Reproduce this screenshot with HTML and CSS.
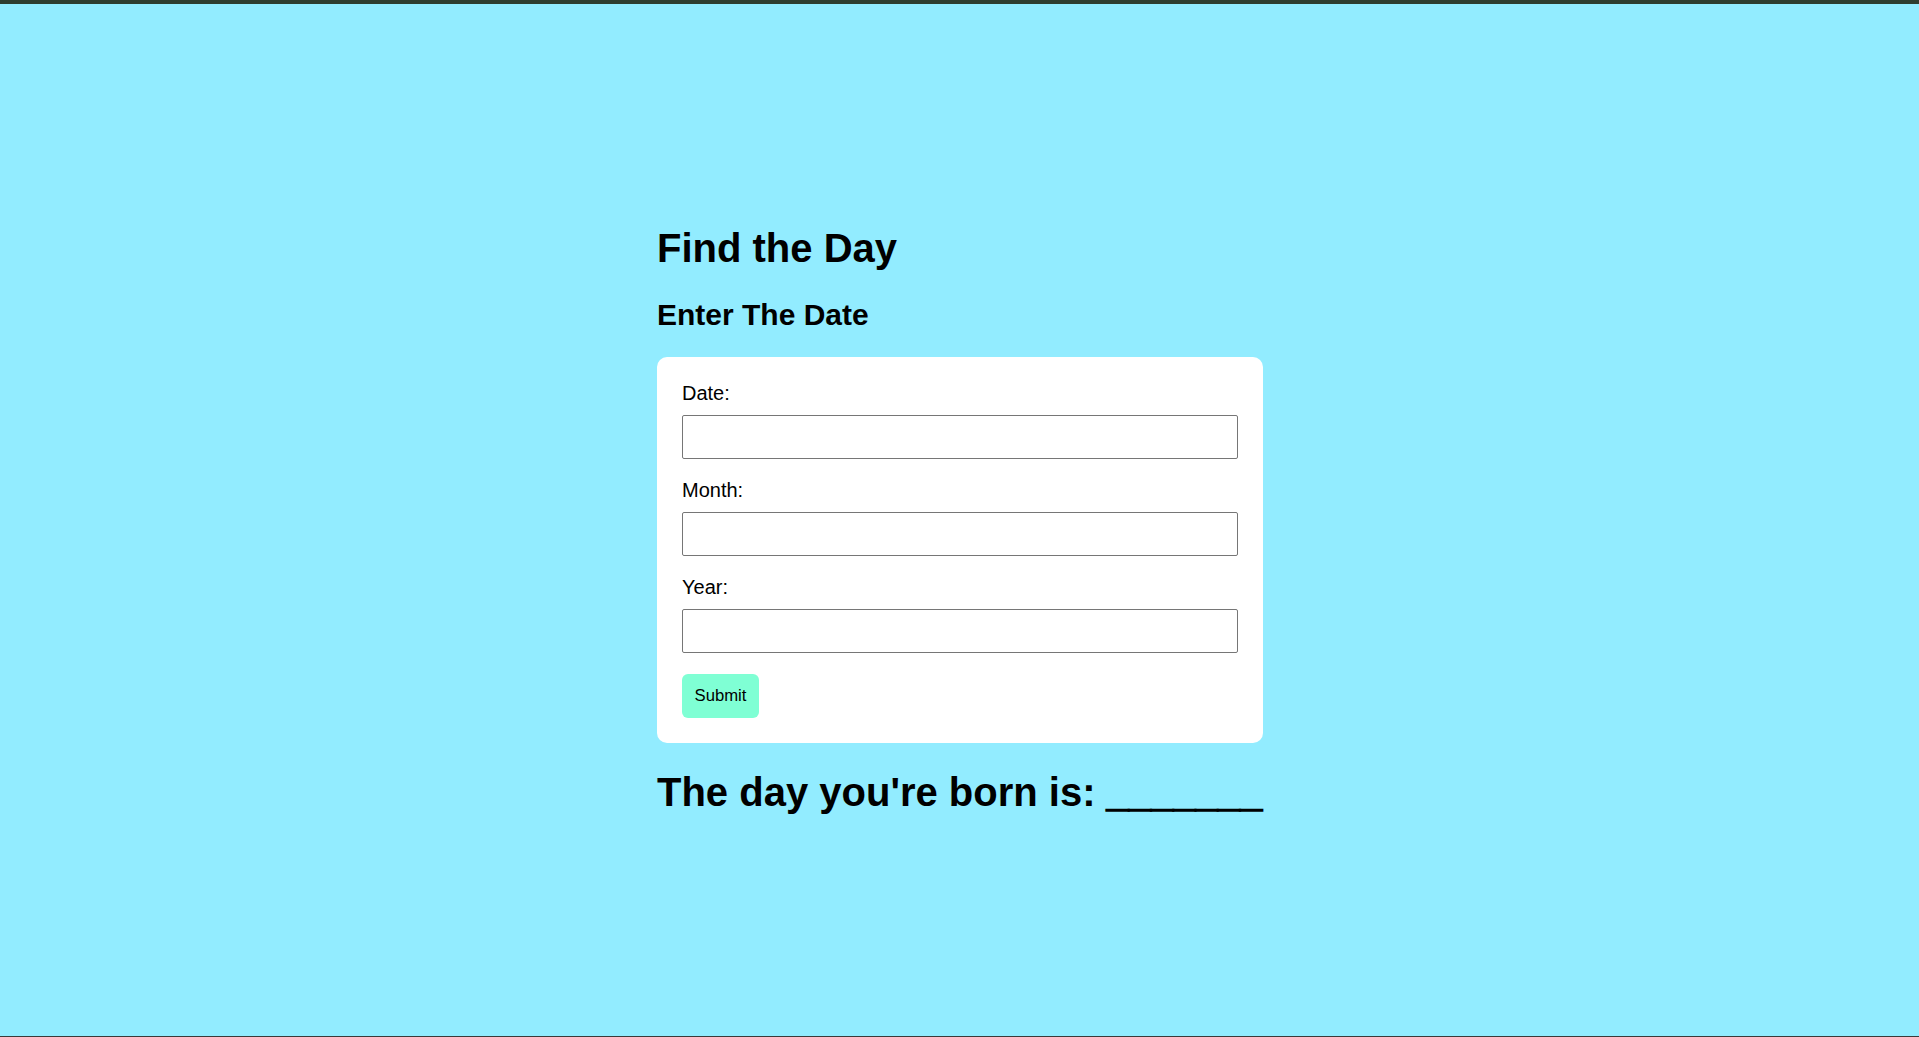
FILE: index.html
```html
<!DOCTYPE html>
<html lang="en">
<head>
<meta charset="utf-8">
<title>Find the Day</title>
<link rel="stylesheet" href="styles.css">
</head>
<body>
<main class="wrap">
  <h1 class="title">Find the Day</h1>
  <h2 class="subtitle">Enter The Date</h2>
  <form class="card">
    <label class="label" for="date">Date:</label>
    <input class="field" id="date" type="text">
    <label class="label" for="month">Month:</label>
    <input class="field" id="month" type="text">
    <label class="label" for="year">Year:</label>
    <input class="field" id="year" type="text">
    <button class="submit" type="button">Submit</button>
  </form>
  <h1 class="result">The day you're born is: <span class="blank">_______</span></h1>
</main>
</body>
</html>
```
FILE: styles.css
```css
* { box-sizing: border-box; }
html, body { height: 100%; }
body {
  margin: 0;
  background: #92ecff;
  border-top: 4px solid #2e3d2f;
  border-bottom: 1px solid #3a3a3a;
  font-family: "Liberation Sans", Arial, sans-serif;
  color: #000;
  display: flex;
  align-items: center;
  justify-content: center;
}
.wrap {
  width: 606px;
  display: flex;
  flex-direction: column;
  margin-left: 1px;
}
.title, .result {
  font-size: 40px;
  font-weight: bold;
  margin: 0 0 27px;
}
.result {
  margin: 27px 0 0;
}
.blank {
  -webkit-text-stroke: 1.5px #000;
}
.subtitle {
  font-size: 30px;
  font-weight: bold;
  margin: 0 0 25px;
}
.card {
  background: #fff;
  border-radius: 10px;
  padding: 25px;
  display: flex;
  flex-direction: column;
  align-items: flex-start;
}
.label {
  font-size: 20px;
  line-height: 23px;
  margin-bottom: 10px;
}
.field {
  width: 100%;
  height: 44px;
  border: 1px solid #767676;
  border-radius: 2px;
  margin: 0 0 20px;
  font-size: 20px;
  background: #fff;
}
.submit {
  width: 77px;
  height: 44px;
  border: none;
  border-radius: 6px;
  background: #7fffd4;
  font-family: "Liberation Sans", Arial, sans-serif;
  font-size: 16.7px;
  color: #000;
  padding: 0;
  margin-top: 1px;
}
```
